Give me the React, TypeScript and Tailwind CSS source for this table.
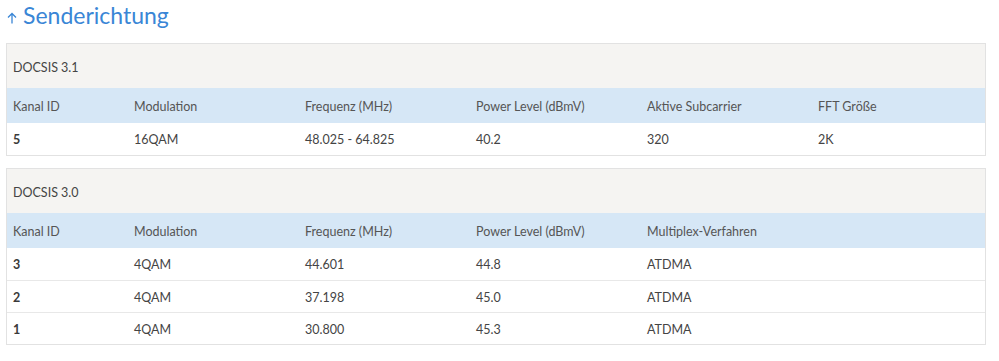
import React from "react";

const colW = ["w-[121px]", "w-[171px]", "w-[171px]", "w-[171px]", "w-[171px]", "w-[171px]"];

function Table({ caption, headers, rows }: { caption: string; headers: string[]; rows: string[][] }) {
  return (
    <div className="mx-[6px] w-[980px] border border-[#e2e2e2] bg-white">
      <div className="h-[44px] bg-[#f5f4f2] px-[6px] pt-[4px] flex items-center text-[12.5px] text-[#444]">{caption}</div>
      <div className="h-[35px] bg-[#d6e7f6] pt-[4px] flex items-center text-[12.5px] text-[#555]">
        {headers.map((h, i) => (
          <div key={i} className={`${colW[i]} px-[6px] shrink-0`}>{h}</div>
        ))}
      </div>
      {rows.map((r, ri) => (
        <div key={ri} className={`h-[32px] pt-[3px] flex items-center text-[12.5px] text-[#444] ${ri > 0 ? "border-t border-[#e8e8e8]" : ""}`}>
          {r.map((c, i) => (
            <div key={i} className={`${colW[i]} px-[6px] shrink-0 ${i === 0 ? "font-bold text-[#3a3a3a]" : ""}`}>{c}</div>
          ))}
        </div>
      ))}
    </div>
  );
}

export default function App() {
  return (
    <div className="w-[999px] h-[361px] bg-white" style={{ fontFamily: "Lato, 'Noto Sans', sans-serif" }}>
      <div className="h-[43px] pl-[6px] pt-[1px] flex items-start">
        <div className="flex items-center h-[28px] text-[#3a86d6]">
          <svg width="12" height="13" viewBox="0 0 12 13" className="mt-[5px] mr-[5px]">
            <path d="M6 12.5V2.5M2 6.5L6 2.5L10 6.5" stroke="#3a86d6" strokeWidth="1.3" fill="none" />
          </svg>
          <span className="text-[23px] leading-none">Senderichtung</span>
        </div>
      </div>
      <Table
        caption="DOCSIS 3.1"
        headers={["Kanal ID", "Modulation", "Frequenz (MHz)", "Power Level (dBmV)", "Aktive Subcarrier", "FFT Größe"]}
        rows={[["5", "16QAM", "48.025 - 64.825", "40.2", "320", "2K"]]}
      />
      <div className="h-[12px]" />
      <Table
        caption="DOCSIS 3.0"
        headers={["Kanal ID", "Modulation", "Frequenz (MHz)", "Power Level (dBmV)", "Multiplex-Verfahren"]}
        rows={[
          ["3", "4QAM", "44.601", "44.8", "ATDMA"],
          ["2", "4QAM", "37.198", "45.0", "ATDMA"],
          ["1", "4QAM", "30.800", "45.3", "ATDMA"],
        ]}
      />
    </div>
  );
}
